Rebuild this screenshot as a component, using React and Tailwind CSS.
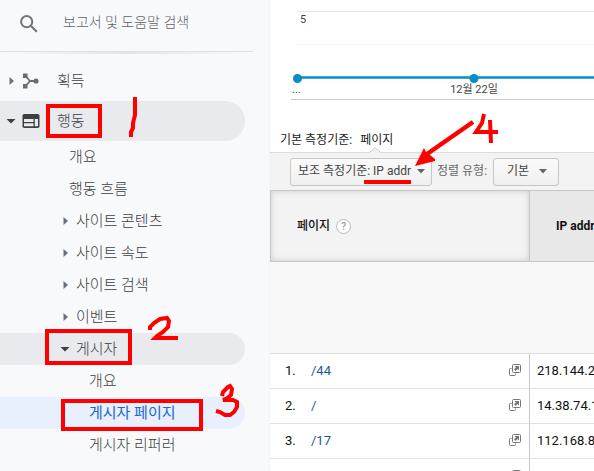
import { useState } from "react";

const NAV_CHILDREN = [
  { label: "개요", pad: "pl-[69px]" },
  { label: "행동 흐름", pad: "pl-[69px]" },
  { label: "사이트 콘텐츠", pad: "pl-[60px]", arrow: "right" },
  { label: "사이트 속도", pad: "pl-[60px]", arrow: "right" },
  { label: "사이트 검색", pad: "pl-[60px]", arrow: "right" },
  { label: "이벤트", pad: "pl-[60px]", arrow: "right" },
  { label: "게시자", pad: "pl-[60px]", arrow: "down", open: true },
  { label: "개요", pad: "pl-[89px]" },
  { label: "게시자 페이지", pad: "pl-[89px]", active: true },
  { label: "게시자 리퍼러", pad: "pl-[89px]" },
];

const ROWS = [
  { index: "1.", page: "/44", ip: "218.144.2" },
  { index: "2.", page: "/", ip: "14.38.74.1" },
  { index: "3.", page: "/17", ip: "112.168.8" },
  { index: "", page: "", ip: "" },
];

function Arrow({ direction }) {
  return (
    <svg width="10" height="10" viewBox="0 0 10 10" className="shrink-0">
      {direction === "down" ? (
        <path d="M0.5 3h9L5 7.5z" fill="#3c4043" />
      ) : (
        <path d="M3.5 1v8L8 5z" fill="#6b7078" />
      )}
    </svg>
  );
}

function SearchIcon() {
  return (
    <svg width="18" height="18" viewBox="0 0 18 18" fill="none" stroke="#757575">
      <circle cx="6.7" cy="6.7" r="5.6" strokeWidth="2" />
      <path d="M10.8 10.8l6 6" strokeWidth="2.2" />
    </svg>
  );
}

function AcquisitionIcon() {
  return (
    <svg width="18" height="16" viewBox="0 0 18 16" fill="#6a6d71">
      <rect x="1" y="0.5" width="4.5" height="4.5" />
      <rect x="1" y="11" width="4.5" height="4.5" />
      <circle cx="14" cy="8" r="2.6" />
      <path
        d="M3.5 3L8 8L3.5 13M8 8h6"
        fill="none"
        stroke="#6a6d71"
        strokeWidth="1.8"
      />
    </svg>
  );
}

function BehaviorIcon() {
  return (
    <svg width="18" height="14" viewBox="0 0 18 14">
      <rect x="0.5" width="17" height="14" rx="1.8" fill="#3c4043" />
      <path d="M2 5h9.5v3H2zM2 9.2h9.5v3H2zM12.8 5H16v7.2h-3.2z" fill="#e8eaed" />
    </svg>
  );
}

function OpenIcon() {
  return (
    <svg width="12" height="12" viewBox="0 0 12 12" fill="none" stroke="#777">
      <rect x="3.5" y="0.5" width="8" height="8" rx="1" />
      <path d="M2.5 4.5h-1a1 1 0 0 0-1 1v5a1 1 0 0 0 1 1h4a1 1 0 0 0 1-1v-1" />
      <path d="M5.500 2H10v4.500L8.600 5.100L6.700 7L5 5.300L6.900 3.400z" fill="#777" stroke="none" />
    </svg>
  );
}

function Sidebar() {
  return (
    <aside className="w-[270px] shrink-0 border-r border-[#f2f4f7] bg-[#f8f9fb] text-[15px] font-light text-[#3c4043]">
      <label className="flex h-[51px] items-center gap-[25px] pb-1 pl-5">
        <SearchIcon />
        <input
          type="search"
          aria-label="보고서 및 도움말 검색"
          placeholder="보고서 및 도움말 검색"
          className="w-40 bg-transparent pb-1 text-sm outline-none placeholder:text-[#5f6368]"
        />
      </label>
      <div className="mr-4 h-[3px] border-t border-[#dfe1e4] bg-linear-to-r from-transparent via-[#e2e4e6] to-transparent" />

      <nav className="mr-6 pt-[7px]">
        <a href="#acquisition" className="flex h-10 items-center pl-[6px]">
          <Arrow direction="right" />
          <span className="flex w-[41px] pl-[6px]">
            <AcquisitionIcon />
          </span>
          <span className="pt-px">획득</span>
        </a>
        <a
          href="#behavior"
          className="flex h-10 items-center rounded-r-full bg-[#e8eaed] pl-[6px]"
        >
          <Arrow direction="down" />
          <span className="flex w-[41px] pl-[6px]">
            <BehaviorIcon />
          </span>
          <span className="pt-px">행동</span>
        </a>
        {NAV_CHILDREN.map((item, i) => (
          <a
            key={i}
            href={`#item-${i}`}
            className={`flex h-8 items-center gap-[6px] rounded-r-full ${item.pad} ${
              item.open ? "bg-[#e8eaed]" : ""
            } ${item.active ? "bg-[#e8f0fe] font-normal text-[#1967d2]" : ""}`}
          >
            {item.arrow && <Arrow direction={item.arrow} />}
            <span className="pt-px">{item.label}</span>
          </a>
        ))}
      </nav>
    </aside>
  );
}

function Chart() {
  return (
    <svg className="block h-[101px] w-full text-[11px]" fill="#444">
      <path d="M27 11.5h2000" stroke="#e6e6e6" />
      <path d="M27 44.5h2000" stroke="#f5f5f5" />
      <path d="M27 77.5h2000" stroke="#058dc7" strokeWidth="2.6" />
      <circle cx="27.5" cy="78.5" r="4.5" fill="#058dc7" />
      <circle cx="204" cy="78.5" r="4.5" fill="#058dc7" />
      <path d="M21 99.5h2000" stroke="#ccc" />
      <text x="30" y="23">5</text>
      <text x="22" y="93">...</text>
      <text x="204" y="93" textAnchor="middle">
        12월 22일
      </text>
    </svg>
  );
}

function Dropdown({ id, label, value, onChange, options, className }) {
  return (
    <span className="relative flex items-center">
      <select
        id={id}
        aria-label={label}
        value={value}
        onChange={(e) => onChange(e.target.value)}
        className={`h-7 appearance-none rounded-[3px] border border-[#c6c6c6] bg-linear-to-b from-[#fafafa] to-[#f0f0f0] pb-[2px] text-[#444] ${className}`}
      >
        {options.map((option) => (
          <option key={option}>{option}</option>
        ))}
      </select>
      <svg
        width="8"
        height="5"
        viewBox="0 0 8 5"
        className={`pointer-events-none absolute ${id === "sort" ? "right-3" : "right-[7px]"}`}
      >
        <path d="M0 0h8L4 4.5z" fill="#666" />
      </svg>
    </span>
  );
}

function Toolbar() {
  const [dimension, setDimension] = useState("보조 측정기준: IP addr");
  const [sort, setSort] = useState("기본");

  return (
    <div className="relative flex h-[38px] items-center border-t border-[#dcdcdc] bg-[#f3f3f3] pl-5">
      <svg
        width="12"
        height="7"
        viewBox="0 0 12 7"
        className="absolute -top-[6px] left-[99px]"
      >
        <path d="M0.5 6L6 0.5L11.5 6V7H0.5z" fill="#f3f3f3" />
        <path d="M0.5 5.5L6 0.5L11.5 5.5" fill="none" stroke="#ccc" />
      </svg>
      <Dropdown
        id="dimension"
        label="보조 측정기준"
        value={dimension}
        onChange={setDimension}
        options={["보조 측정기준: IP addr"]}
        className="w-[142px] pl-[7px]"
      />
      <label htmlFor="sort" className="pr-[6px] pb-[2px] pl-[5px] text-[#666]">
        정렬 유형:
      </label>
      <Dropdown
        id="sort"
        label="정렬 유형"
        value={sort}
        onChange={setSort}
        options={["기본"]}
        className="w-[66px] pl-[13px]"
      />
    </div>
  );
}

function PageTable() {
  return (
    <table className="w-full table-fixed border-separate border-spacing-0 text-left text-[13px] text-[#111]">
      <thead className="text-xs">
        <tr className="h-[72px]">
          <th className="w-[260px] border border-[#c6c6c6] bg-[#f3f3f3] pl-[26px] font-medium shadow-[inset_0_0_6px_#ccc]">
            <span className="flex items-center gap-[6px]">
              페이지
              <button
                type="button"
                aria-label="도움말"
                className="h-[15px] w-[15px] rounded-full border border-[#bbb] bg-white text-[10px] leading-[13px] text-[#999]"
              >
                ?
              </button>
            </span>
          </th>
          <th className="border-y border-[#c6c6c6] bg-[#e8e8e8] pl-[26px] font-bold whitespace-nowrap">
            IP addr
          </th>
        </tr>
      </thead>
      <tbody>
        <tr className="h-[92px] bg-[#f8f8f8]">
          <td colSpan={2} className="border-b border-[#ddd]" />
        </tr>
        {ROWS.map((row, i) => (
          <tr key={i} className="h-[35px]">
            <td className="border-r border-b border-r-[#c6c6c6] border-b-[#e0e0e0] pr-2 pb-px pl-[15px]">
              <div className="flex items-center">
                <span className="w-[26px]">{row.index}</span>
                <a href={`#row-${i}`} className="flex-1 text-[#15599c]">
                  {row.page}
                </a>
                <button type="button" aria-label="새 창에서 열기">
                  <OpenIcon />
                </button>
              </div>
            </td>
            <td className="border-b border-[#e0e0e0] pl-[7px] whitespace-nowrap">
              {row.ip}
            </td>
          </tr>
        ))}
      </tbody>
    </table>
  );
}

// hand-drawn red step markers
function Annotations() {
  return (
    <svg
      width="594"
      height="471"
      viewBox="0 0 594 471"
      fill="none"
      stroke="#ff0000"
      strokeWidth="4"
      className="pointer-events-none absolute top-0 left-0"
    >
      <rect x="48" y="106" width="52" height="30" />
      <rect x="47" y="331" width="83" height="32" />
      <rect x="63" y="401" width="138" height="28" />
      <path d="M135 97v18l-2 8v5l-2 4v5" />
      <path d="M150 330v-3l4-4l6-4l7-1l2 3l-1 6l-5 5l-6 4l-2 2h23" />
      <path d="M222 396l1-4l5-5l2-1l2 3l-1 6l-5 4l-3 1h10l4 2v5l-3 5l-4 3h-5l-5-3l-4-1" />
      <path d="M484 114l-2 9l-6 9h22M490 120l1 23" />
      <path d="M473 122l-46 32" strokeWidth="4.5" />
      <path d="M415 166l9-18l2 4l9 7v2z" fill="#ff0000" stroke="none" />
      <path d="M364 182h47" />
    </svg>
  );
}

export default function App() {
  return (
    <div className="relative flex h-screen overflow-hidden bg-white font-[Roboto,'Noto_Sans_CJK_KR',sans-serif]">
      <Sidebar />
      <main className="min-w-0 flex-1 text-xs">
        <Chart />
        <div className="flex h-[51px] items-end gap-2 pb-1 pl-[10px] text-[#222]">
          <span>기본 측정기준:</span>
          <a href="#page">페이지</a>
        </div>
        <Toolbar />
        <PageTable />
      </main>
      <Annotations />
    </div>
  );
}
